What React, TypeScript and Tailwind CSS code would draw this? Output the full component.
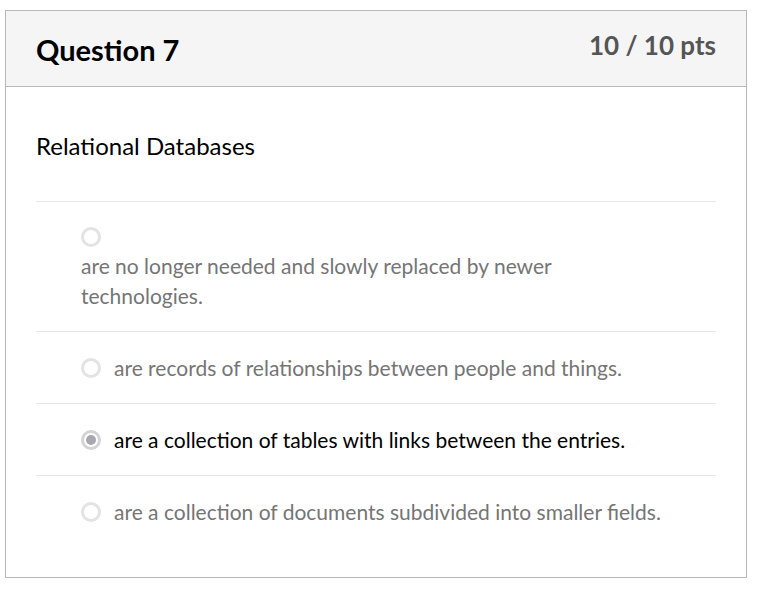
import React from "react";

interface Answer {
  id: number;
  text: string;
  selected?: boolean;
  stacked?: boolean;
}

const answers: Answer[] = [
  { id: 1, text: "are no longer needed and slowly replaced by newer technologies.", stacked: true },
  { id: 2, text: "are records of relationships between people and things." },
  { id: 3, text: "are a collection of tables with links between the entries.", selected: true },
  { id: 4, text: "are a collection of documents subdivided into smaller fields." },
];

function Radio({ selected }: { selected?: boolean }) {
  if (selected) {
    return (
      <span className="flex h-5 w-5 shrink-0 items-center justify-center rounded-full border-[3px] border-[#d4d4d8] bg-white">
        <span className="h-[10px] w-[10px] rounded-full bg-[#a8a8b0]" />
      </span>
    );
  }
  return <span className="block h-5 w-5 shrink-0 rounded-full border-[3px] border-[#e3e3e3] bg-white" />;
}

export default function App() {
  return (
    <div className="min-h-[602px] bg-white pl-[5px] pt-[10px] font-['Lato','Liberation_Sans',sans-serif]">
      <section className="w-[742px] border border-[#b8b8b8] bg-white">
        <header className="flex h-[76px] items-start justify-between border-b border-[#b8b8b8] bg-[#f5f5f5] px-[30px]">
          <h2 className="mt-[19px] text-[29px] font-bold leading-[40px] text-black">Question 7</h2>
          <span className="mt-[18px] text-[26px] font-bold leading-[32px] text-[#555555]">10 / 10 pts</span>
        </header>
        <div className="px-[30px] pb-[30px]">
          <p className="pb-[37px] pt-[41px] text-[24px] leading-[36px] text-black">Relational Databases</p>
          <ul>
            {answers.map((answer) =>
              answer.stacked ? (
                <li key={answer.id} className="border-t border-[#e8e8e8] pb-[20px] pl-[45px] pt-[25px]">
                  <Radio />
                  <p className="mt-[4px] w-[540px] text-[21px] leading-[30px] text-[#757575]">{answer.text}</p>
                </li>
              ) : (
                <li
                  key={answer.id}
                  className="flex h-[72px] items-center gap-[13px] border-t border-[#e8e8e8] pl-[45px]"
                >
                  <Radio selected={answer.selected} />
                  <span
                    className={
                      answer.selected
                        ? "text-[21px] leading-[30px] text-black"
                        : "text-[21px] leading-[30px] text-[#757575]"
                    }
                  >
                    {answer.text}
                  </span>
                </li>
              )
            )}
          </ul>
        </div>
      </section>
    </div>
  );
}
